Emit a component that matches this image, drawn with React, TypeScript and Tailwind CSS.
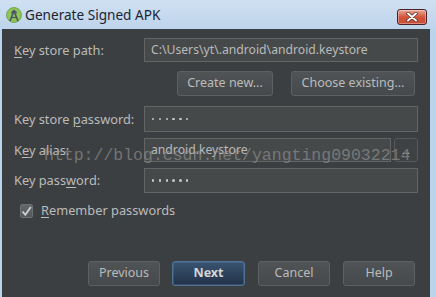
import React from "react";

const font = { fontFamily: '"Noto Sans", "Liberation Sans", sans-serif' };

function AndroidIcon() {
  return (
    <svg width="16" height="16" viewBox="0 0 16 16">
      <circle cx="8" cy="8" r="7.5" fill="#8fc45a" />
      <circle cx="8" cy="8" r="7.5" fill="none" stroke="#6b9a3c" strokeWidth="0.8" />
      <path d="M5 6.5 a3 3 0 0 1 6 0 z" fill="#5a6470" />
      <path d="M8 4 L4 14 M8 4 L12 14" stroke="#4d5660" strokeWidth="1.6" fill="none" />
      <path d="M5 10.5 h6" stroke="#4d5660" strokeWidth="1.2" />
      <circle cx="8" cy="4" r="1.2" fill="#4d5660" />
    </svg>
  );
}

function CloseButton() {
  return (
    <div className="w-[30px] h-[16px] rounded-[3px] border border-[#4a1f28] bg-gradient-to-b from-[#e9a795] via-[#d0553c] to-[#c84a33] flex items-center justify-center shadow-[inset_0_0_0_1px_rgba(255,255,255,0.35)]">
      <svg width="12" height="10" viewBox="0 0 12 10">
        <path d="M2 1.5 L10 8.5 M10 1.5 L2 8.5" stroke="#5a2a2a" strokeWidth="3.4" strokeLinecap="round" />
        <path d="M2 1.5 L10 8.5 M10 1.5 L2 8.5" stroke="#ffffff" strokeWidth="2" strokeLinecap="round" />
      </svg>
    </div>
  );
}

function Field({ children, className = "" }: { children?: React.ReactNode; className?: string }) {
  return (
    <div className={`h-full border border-[#646464] bg-[#45494a] flex items-center pl-[6px] text-[12.2px] text-[#bbbbbb] ${className}`}>
      {children}
    </div>
  );
}

function Dots() {
  return (
    <div className="flex items-center gap-[4.4px] pl-[1px]">
      {[0, 1, 2, 3, 4, 5].map((i) => (
        <span key={i} className="w-[2.4px] h-[2.4px] rounded-full bg-[#c8c8c8]" />
      ))}
    </div>
  );
}

function Btn({ children, className = "" }: { children: React.ReactNode; className?: string }) {
  return (
    <div className={`h-[25px] rounded-[3px] border border-[#5e6163] bg-gradient-to-b from-[#505456] to-[#45494b] flex items-center justify-center text-[12.5px] text-[#bbbbbb] ${className}`}>
      {children}
    </div>
  );
}

function Label({ children }: { children: React.ReactNode }) {
  return <div className="w-[130px] shrink-0 text-[12.8px] text-[#bbbbbb] leading-none">{children}</div>;
}

export default function App() {
  return (
    <div className="w-[436px] h-[297px] flex flex-col bg-[#bcd3ec] overflow-hidden" style={font}>
      <div className="h-[29px] shrink-0 flex items-center bg-gradient-to-b from-[#cfe0f2] to-[#bed4ec] pl-[6px] pr-[9px]">
        <AndroidIcon />
        <span className="ml-[3px] text-[13.6px] text-[#1c2433] flex-1 pt-[1px]">Generate Signed APK</span>
        <div className="pt-[4px]">
          <CloseButton />
        </div>
      </div>
      <div className="flex-1 flex pl-[2px] pr-[6px]">
        <div className="relative flex-1 bg-[#3c3f41] pl-[12px] pr-[12px] pt-[9px]">
          <div className="flex items-center h-[24px]">
            <Label>
              <span className="underline underline-offset-2">K</span>ey store path:
            </Label>
            <Field className="flex-1">C:\Users\yt\.android\android.keystore</Field>
          </div>
          <div className="flex justify-end h-[25px] mt-[9px] pr-[3px] gap-[18px]">
            <Btn className="w-[96px]">Create new...</Btn>
            <Btn className="w-[124px]">Choose existing...</Btn>
          </div>
          <div className="flex items-center h-[26px] mt-[10px]">
            <Label>
              Key store <span className="underline underline-offset-2">p</span>assword:
            </Label>
            <Field className="flex-1">
              <Dots />
            </Field>
          </div>
          <div className="flex items-center h-[24px] mt-[6px]">
            <Label>
              K<span className="underline underline-offset-2">e</span>y alias:
            </Label>
            <Field className="flex-1">android.keystore</Field>
            <div className="ml-[3px] w-[24px] h-full rounded-[3px] border border-[#55595b] bg-[#3f4244] flex items-center justify-center text-[10px] text-[#bbbbbb] leading-none">
              ...
            </div>
          </div>
          <div className="flex items-center h-[25px] mt-[6px]">
            <Label>
              Key pass<span className="underline underline-offset-2">w</span>ord:
            </Label>
            <Field className="flex-1">
              <Dots />
            </Field>
          </div>
          <div className="flex items-center mt-[11px] pl-[6px] h-[14px]">
            <div className="w-[13px] h-[14px] rounded-[2px] border border-[#6d7072] bg-gradient-to-b from-[#63676a] to-[#54585a] flex items-center justify-center">
              <svg width="11" height="11" viewBox="0 0 11 11">
                <path d="M1.5 5.5 L4.3 8.8 L9.8 1" stroke="#d0d0d0" strokeWidth="1.8" fill="none" />
              </svg>
            </div>
            <span className="ml-[8px] text-[12.8px] text-[#bbbbbb]">
              <span className="underline underline-offset-2">R</span>emember passwords
            </span>
          </div>
          <div className="flex justify-end gap-[12px] mt-[43px] pr-[3px] h-[25px]">
            <Btn className="w-[72px]">Previous</Btn>
            <div className="w-[73px] h-[25px] rounded-[3px] border border-[#4e7397] bg-gradient-to-b from-[#3a5472] to-[#223248] flex items-center justify-center text-[12.5px] font-bold text-[#d6d6d6] shadow-[inset_0_0_0_1px_rgba(90,130,170,0.35)]">
              Next
            </div>
            <Btn className="w-[72px] ml-[1px]">Cancel</Btn>
            <Btn className="w-[72px] ml-[1px]">Help</Btn>
          </div>
          <div
            className="absolute left-[42px] top-[119px] text-[16.5px] text-[#9a9a9a]/60 leading-none pointer-events-none whitespace-nowrap"
            style={{ fontFamily: '"Liberation Mono", monospace' }}
          >
            http://blog.csdn.net/yangting09032214
          </div>
        </div>
      </div>
    </div>
  );
}
